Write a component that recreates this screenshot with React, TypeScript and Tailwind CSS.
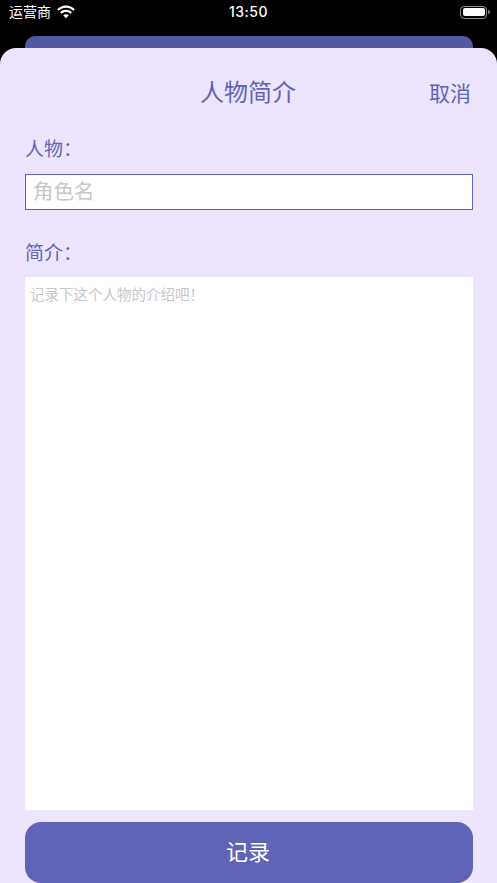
const font = "font-['Inter','Noto_Sans_CJK_SC',sans-serif]";

function WifiIcon() {
  return (
    <svg width="20" height="15" viewBox="0 0 19 14" fill="white">
      <path d="M9.5 2.6c2.7 0 5.1 1 7 2.800l1.400-1.500C15.700 1.700 12.700.4 9.500.4S3.300 1.700 1.100 3.900l1.400 1.500c1.900-1.800 4.300-2.800 7-2.800z" />
      <path d="M9.500 6.600c1.600 0 3 .6 4.200 1.600l1.400-1.500C13.600 5.300 11.600 4.500 9.500 4.500S5.400 5.300 3.900 6.700l1.400 1.500c1.200-1 2.600-1.600 4.200-1.600z" />
      <path d="M9.500 8.600c-1 0-1.900.4-2.600 1l2.600 2.900 2.600-2.900c-.7-.6-1.600-1-2.600-1z" />
    </svg>
  );
}

function BatteryIcon() {
  return (
    <div className="flex items-center gap-[1px]">
      <div className="w-[27px] h-[13px] rounded-[4px] border border-[#8a8a8a] p-[1.5px]">
        <div className="w-full h-full rounded-[2px] bg-white" />
      </div>
      <div className="w-[1.5px] h-[4px] rounded-r-sm bg-[#8a8a8a]" />
    </div>
  );
}

export default function App() {
  return (
    <div className={`${font} w-[497px] h-[883px] overflow-hidden bg-black flex flex-col`}>
      {/* Status bar */}
      <div className="h-[36px] shrink-0 grid grid-cols-3 items-center pl-[9px] pr-[7px] pb-[12px] text-white">
        <div className="flex items-center gap-[5px]">
          <span className="text-[14px] leading-none">运营商</span>
          <WifiIcon />
        </div>
        <span className="text-center text-[14px] font-medium tracking-[0.5px] leading-none pr-[2px]">13:50</span>
        <div className="flex justify-end">
          <BatteryIcon />
        </div>
      </div>

      {/* Card behind the sheet */}
      <div className="ml-[25px] mr-[24px] h-[12px] shrink-0 rounded-t-[10px] bg-[#5358a2]" />

      {/* Sheet */}
      <div className="flex-1 min-h-0 flex flex-col rounded-t-[16px] bg-[#ede4fe] pl-[25px] pr-[24px]">
        <div className="relative h-[44px] mt-[23px] shrink-0 flex items-center justify-center pr-[2px] text-[#6064b6]">
          <span className="text-[24px] leading-none">人物简介</span>
          <span className="absolute right-[2px] top-1/2 -translate-y-1/2 text-[21px] leading-none">取消</span>
        </div>

        <div className="mt-[22px] text-[19px] leading-[26px] text-[#6064b6]">人物：</div>
        <div className="mt-[11px] h-[36px] shrink-0 flex items-center border-[1.5px] border-[#6064b6] bg-white px-[7px] text-[20.5px] text-[#c7c7cc]">
          角色名
        </div>

        <div className="mt-[31px] text-[19px] leading-[26px] text-[#6064b6]">简介：</div>
        <div className="mt-[10px] flex-1 min-h-0 bg-white px-[5px] py-[9px] text-[14.5px] leading-[17px] text-[#c7c7cc]">
          记录下这个人物的介绍吧！
        </div>

        <button className="mt-[12px] h-[61px] shrink-0 rounded-[16px] bg-[#6064b6] pr-[2px] text-[22px] text-white">
          记录
        </button>
      </div>
    </div>
  );
}
